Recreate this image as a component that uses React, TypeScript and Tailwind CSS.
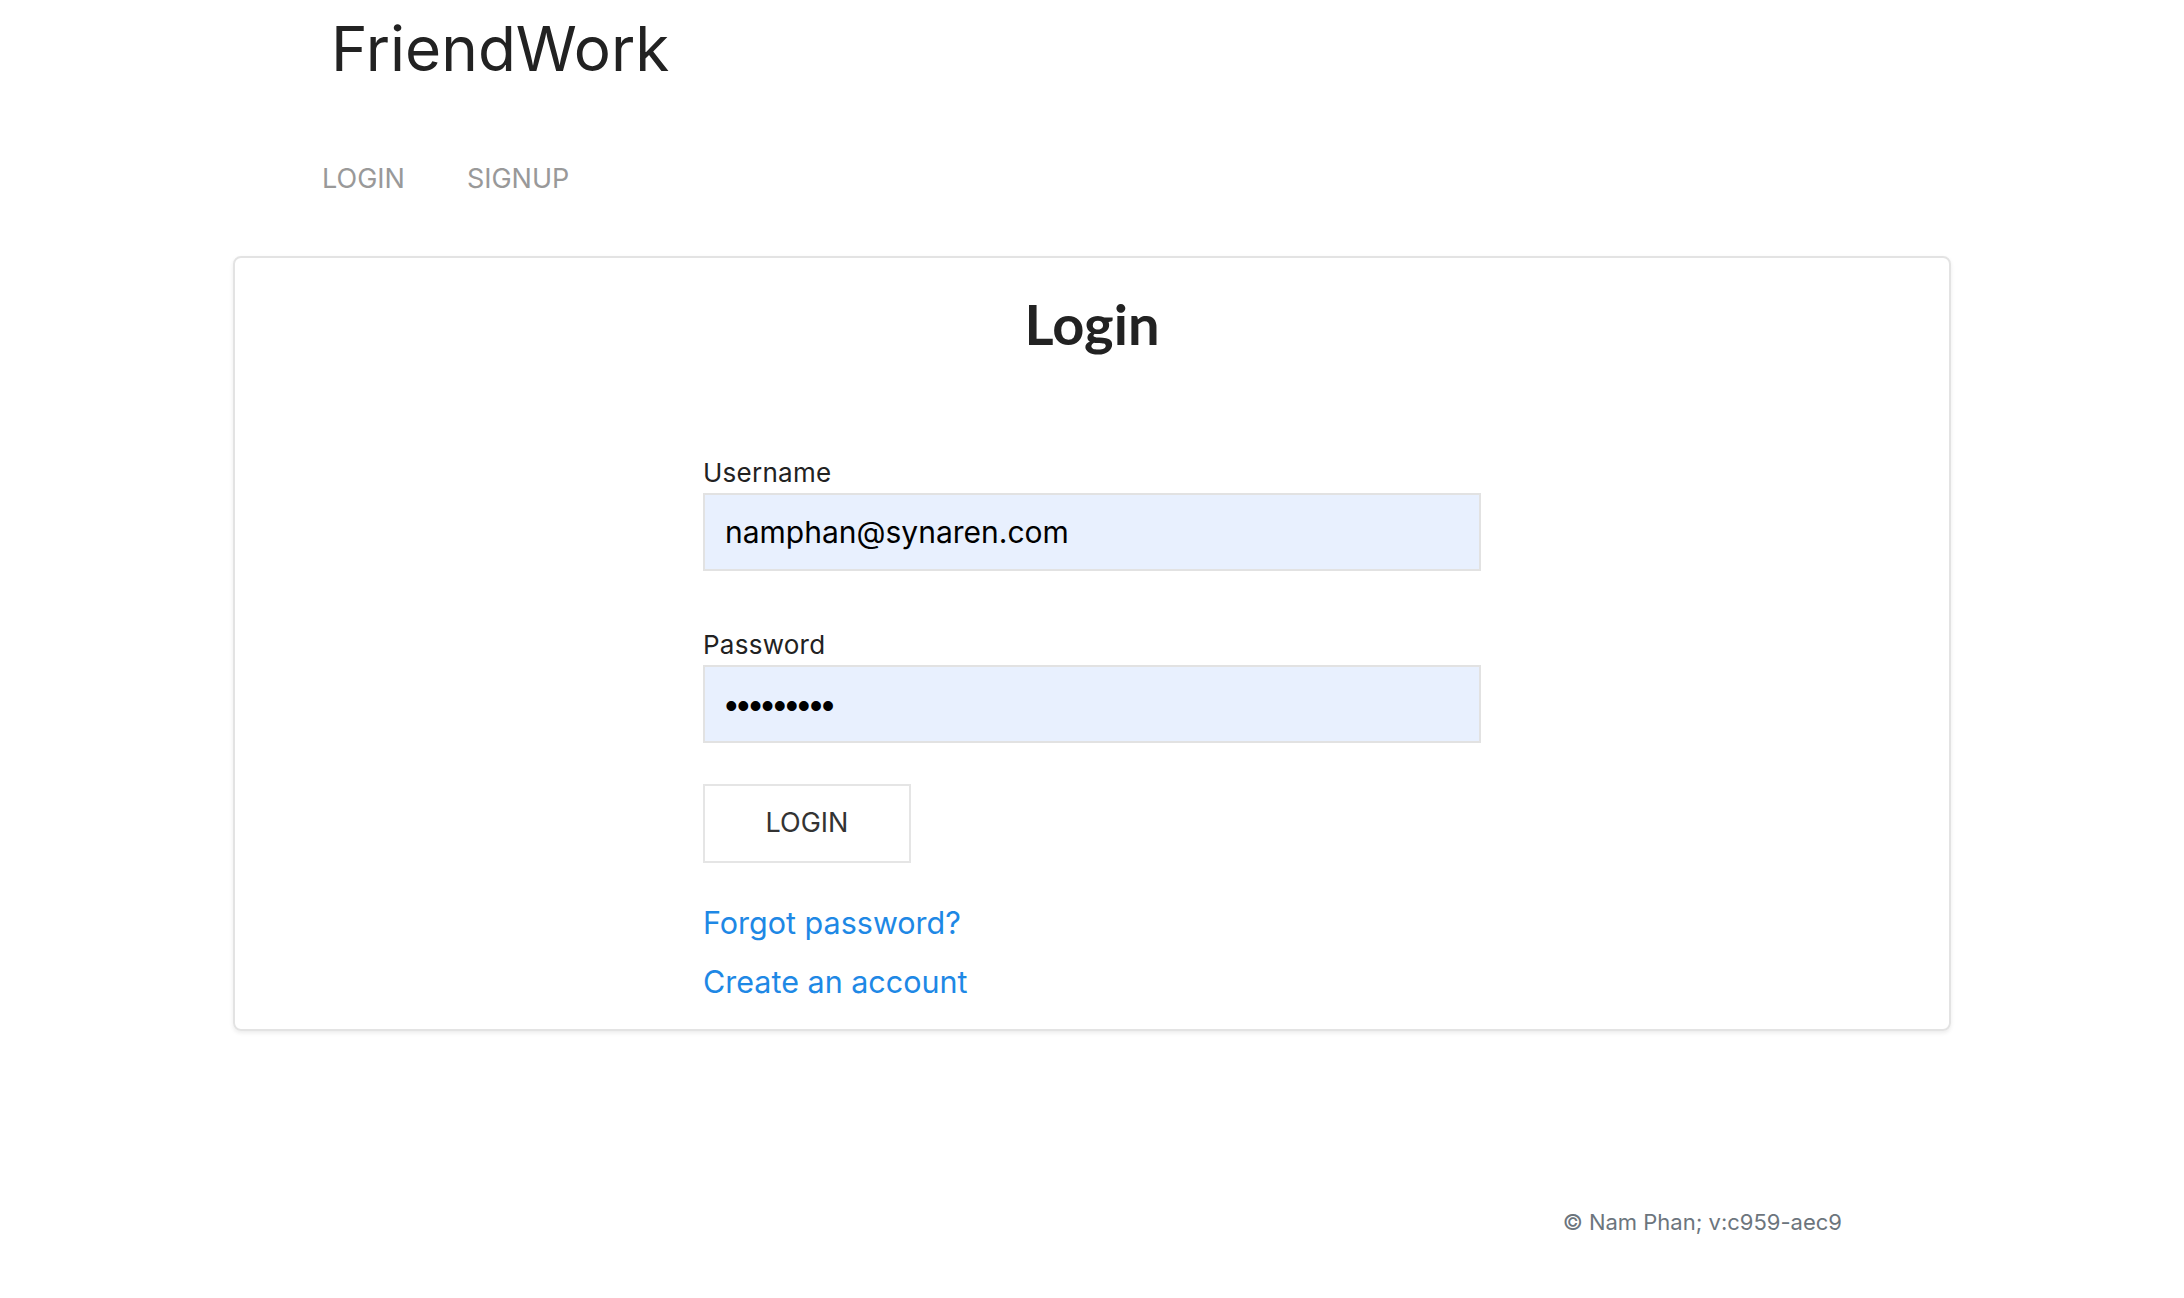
import { useState } from 'react'

function App() {
  const [username, setUsername] = useState('namphan@synaren.com')
  const [password, setPassword] = useState('secretpwd')

  return (
    <div className="min-h-screen bg-white font-['Inter',sans-serif] text-[#222]">
      <div className="w-[1718px] mx-auto">
        <header className="pl-[98px] pt-[18px]">
          <h1 className="text-[62px] leading-none font-normal text-[#222]">FriendWork</h1>
        </header>

        <nav className="flex gap-[62px] pl-[89px] mt-[85px] text-[27px] leading-none text-[#999]">
          <a href="#" className="hover:text-[#666]">LOGIN</a>
          <a href="#" className="hover:text-[#666]">SIGNUP</a>
        </nav>

        <div className="mt-[64px] border-2 border-[#e3e3e3] rounded-[8px] shadow-[0_2px_4px_rgba(0,0,0,0.08)] pt-[38px] pb-[32px]">
          <h2 className="text-center font-['Lato',sans-serif] font-bold text-[56px] leading-none text-[#222]">Login</h2>

          <form className="w-[778px] mx-auto mt-[108px]" onSubmit={(e) => e.preventDefault()}>
            <label className="block text-[26px] tracking-[0.01em] leading-none text-[#222]">Username</label>
            <input
              type="text"
              value={username}
              onChange={(e) => setUsername(e.target.value)}
              className="block w-full h-[78px] mt-[7px] px-[20px] border-2 border-[#e2e2e2] bg-[#e8f0fe] text-[30px] text-black outline-none"
            />

            <label className="block mt-[61px] text-[26px] tracking-[0.01em] leading-none text-[#222]">Password</label>
            <input
              type="password"
              value={password}
              onChange={(e) => setPassword(e.target.value)}
              className="block w-full h-[78px] mt-[7px] px-[20px] pt-[3px] border-2 border-[#e2e2e2] bg-[#e8f0fe] font-['Liberation_Sans',sans-serif] text-[36px] tracking-[-0.5px] text-black outline-none"
            />

            <button
              type="submit"
              className="block mt-[41px] w-[208px] h-[79px] border-2 border-[#e5e5e5] bg-white text-[27px] text-[#333]"
            >
              LOGIN
            </button>

            <div className="mt-[45px] flex flex-col gap-[28px] text-[30.5px] leading-none text-[#1e88e5]">
              <a href="#" className="w-fit hover:underline">Forgot password?</a>
              <a href="#" className="w-fit hover:underline">Create an account</a>
            </div>
          </form>
        </div>

        <footer className="mt-[180px] pr-[109px] text-right text-[22px] leading-none text-[#6c757d]">
          © Nam Phan; v:c959-aec9
        </footer>
      </div>
    </div>
  )
}

export default App
